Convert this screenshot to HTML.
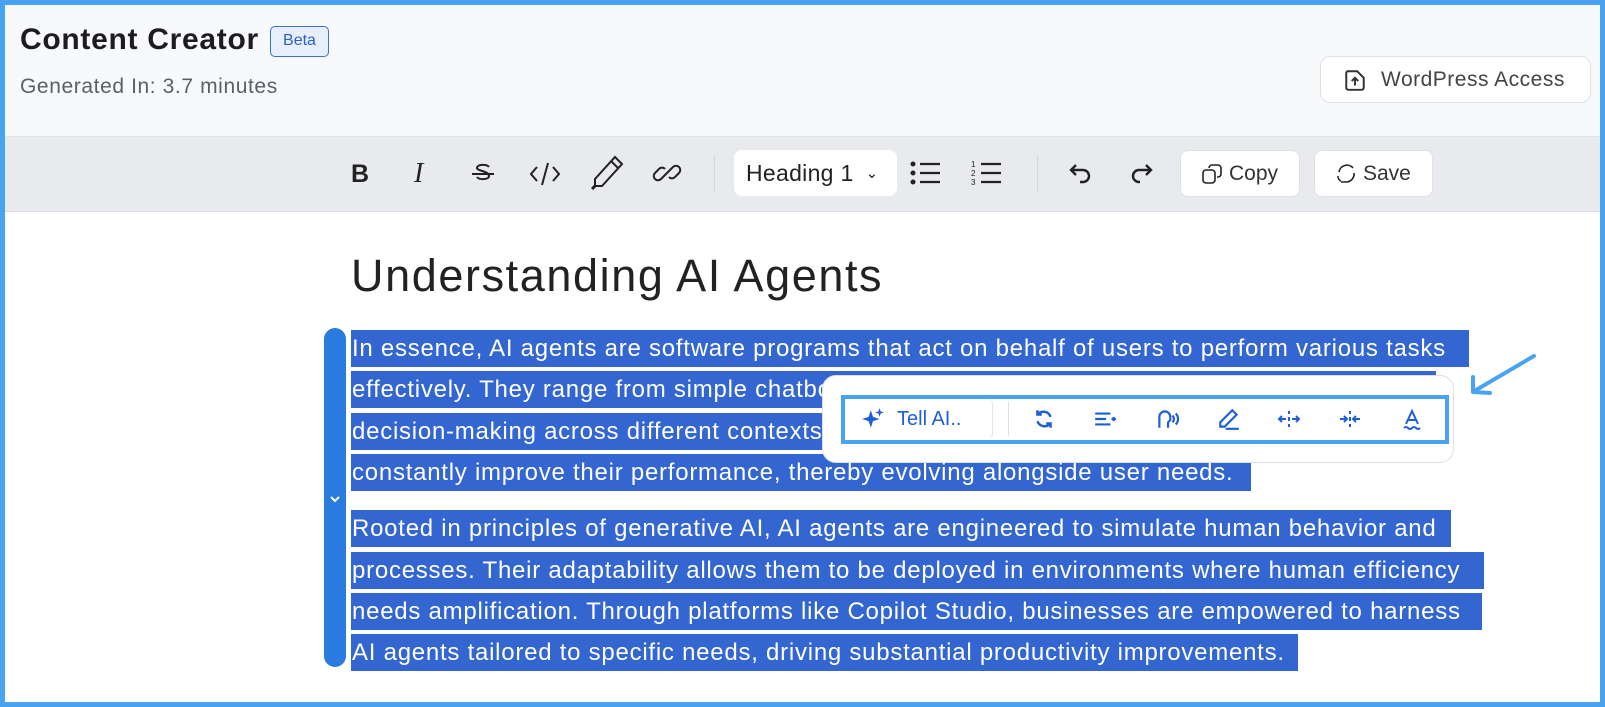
<!DOCTYPE html>
<html><head><meta charset="utf-8"><style>
*{margin:0;padding:0;box-sizing:border-box}
body{width:1605px;height:707px;overflow:hidden;background:#4aa3f0;font-family:"Liberation Sans",sans-serif;position:relative}
.abs{position:absolute}
.btn{position:absolute;background:#fff;border:1px solid #dfe1e5;border-radius:8px;display:flex;align-items:center;gap:8px;color:#333;font-size:21px}
.ln{position:absolute;left:351px;height:37px;background:#3366d0;color:#fff;font-size:24px;letter-spacing:0.75px;line-height:37px;white-space:nowrap;overflow:hidden;padding-left:1px}
.ic{position:absolute;top:408px}
</style></head><body>
<div class="abs" style="left:5px;top:5px;width:1595px;height:697px;background:#fff"></div>
<div class="abs" style="left:5px;top:5px;width:1595px;height:131px;background:#f8f9fb"></div>
<div class="abs" style="left:20px;top:23px;font-size:30px;font-weight:bold;color:#1d1d1f;letter-spacing:0.7px">Content Creator</div>
<div class="abs" style="left:270px;top:26px;width:59px;height:31px;border:1.5px solid #3a6fd6;border-radius:5px;background:#e8effc;color:#2d5fc8;font-size:16px;line-height:28px;text-align:center">Beta</div>
<div class="abs" style="left:20px;top:75px;font-size:21px;color:#5a5f68;letter-spacing:0.6px">Generated In: 3.7 minutes</div>
<div class="btn" style="left:1320px;top:56px;width:271px;height:47px;border-radius:10px;padding-left:22px;gap:14px;color:#444;letter-spacing:0.5px"><svg width="24" height="24" viewBox="0 0 22 22" fill="none" stroke="#333" stroke-width="1.8"><path d="M4 3h9l6 6v9a2 2 0 0 1-2 2H5a2 2 0 0 1-2-2V5a2 2 0 0 1 1-2z"/><path d="M11 16v-6M8 12l3-3 3 3"/></svg>WordPress Access</div>
<div class="abs" style="left:5px;top:136px;width:1595px;height:76px;background:#e9eaee;border-top:1px solid #e0e1e5;border-bottom:1px solid #dcdde2"></div>
<div class="abs" style="left:351px;top:160px;font-size:25px;font-weight:bold;color:#222">B</div>
<div class="abs" style="left:414px;top:158px;font-size:28px;font-style:italic;font-family:'Liberation Serif',serif;color:#222">I</div>
<svg class="abs" style="left:466px;top:157px" width="34" height="34" viewBox="0 0 34 34" fill="none" stroke="#222" stroke-width="2"><path d="M23 10c-2-3-12-3-12 1 0 3 12 3 12 8 0 4-10 4-12 1M6 17h22"/></svg>
<svg class="abs" style="left:527px;top:159px" width="36" height="30" viewBox="0 0 36 30" fill="none" stroke="#222" stroke-width="2"><path d="M10 8l-6 7 6 7M26 8l6 7-6 7M21 4l-6 22"/></svg>
<svg class="abs" style="left:587px;top:153px" width="40" height="40" viewBox="0 0 40 40" fill="none" stroke="#222" stroke-width="2"><path d="M28 4l7 7-20 22H8v-7z M24 8l7 7"/><path d="M8 33l-3 3" stroke-width="3"/></svg>
<svg class="abs" style="left:651px;top:157px" width="32" height="32" viewBox="0 0 32 32" fill="none" stroke="#222" stroke-width="2"><path d="M14 18l-4 4a4 4 0 0 1-6-6l4-4a4 4 0 0 1 6 0M18 14l4-4a4 4 0 0 1 6 6l-4 4a4 4 0 0 1-6 0M12 20l8-8"/></svg>
<div class="abs" style="left:714px;top:156px;width:1px;height:36px;background:#d5d6da"></div>
<div class="btn" style="left:734px;top:150px;width:163px;height:46px;border:none;padding-left:12px;font-size:23px;color:#222;letter-spacing:0.3px">Heading 1 <span style="font-size:15px;margin-left:4px">&#8964;</span></div>
<svg class="abs" style="left:908px;top:158px" width="34" height="30" viewBox="0 0 34 30" fill="none" stroke="#222" stroke-width="2.2"><path d="M12 6h20M12 15h20M12 24h20"/><circle cx="5" cy="6" r="1.4" fill="#222"/><circle cx="5" cy="15" r="1.4" fill="#222"/><circle cx="5" cy="24" r="1.4" fill="#222"/></svg>
<svg class="abs" style="left:969px;top:158px" width="34" height="30" viewBox="0 0 34 30" fill="none" stroke="#222" stroke-width="2.2"><path d="M12 6h20M12 15h20M12 24h20"/><text x="2" y="9" font-size="8" fill="#222" stroke="none">1</text><text x="2" y="18" font-size="8" fill="#222" stroke="none">2</text><text x="2" y="27" font-size="8" fill="#222" stroke="none">3</text></svg>
<div class="abs" style="left:1037px;top:156px;width:1px;height:36px;background:#d5d6da"></div>
<svg class="abs" style="left:1068px;top:161px" width="26" height="24" viewBox="0 0 26 24" fill="none" stroke="#222" stroke-width="2.4"><path d="M8 4L3 9l5 5M3 9h12a6 6 0 0 1 0 12h-3"/></svg>
<svg class="abs" style="left:1128px;top:161px" width="26" height="24" viewBox="0 0 26 24" fill="none" stroke="#222" stroke-width="2.4"><path d="M18 4l5 5-5 5M23 9H11a6 6 0 0 0 0 12h1"/></svg>
<div class="btn" style="left:1180px;top:150px;width:120px;height:47px;padding-left:20px;gap:6px"><svg width="22" height="22" viewBox="0 0 22 22" fill="none" stroke="#222" stroke-width="1.6"><rect x="2" y="7" width="12" height="13" rx="3"/><path d="M8 5a3 3 0 0 1 3-3h6a3 3 0 0 1 3 3v6a3 3 0 0 1-3 3h-1"/></svg>Copy</div>
<div class="btn" style="left:1314px;top:150px;width:119px;height:47px;padding-left:20px;gap:6px"><svg width="22" height="22" viewBox="0 0 22 22" fill="none" stroke="#222" stroke-width="1.6"><path d="M4 9a8 8 0 0 1 14-4M19 10a8 8 0 0 1-8 9H6M3 13a5 5 0 0 0 3 5"/></svg>Save</div>

<div class="abs" style="left:351px;top:250px;font-size:45px;color:#222;letter-spacing:1.6px">Understanding AI Agents</div>
<div class="abs" style="left:324px;top:328px;width:22px;height:339px;background:#2a7be0;border-radius:11px"></div>
<svg class="abs" style="left:329px;top:494px" width="12" height="10" viewBox="0 0 12 10" fill="none" stroke="#fff" stroke-width="2"><path d="M2 3l4 4 4-4"/></svg>

<div class="ln" style="top:330px;width:1118px">In essence, AI agents are software programs that act on behalf of users to perform various tasks</div>
<div class="ln" style="top:371px;width:1085px">effectively. They range from simple chatbots to more complex systems capable of autonomous</div>
<div class="ln" style="top:413px;width:1085px">decision-making across different contexts, and they can learn from experience and</div>
<div class="ln" style="top:454px;width:900px">constantly improve their performance, thereby evolving alongside user needs.</div>
<div class="ln" style="top:510px;width:1100px">Rooted in principles of generative AI, AI agents are engineered to simulate human behavior and</div>
<div class="ln" style="top:552px;width:1133px">processes. Their adaptability allows them to be deployed in environments where human efficiency</div>
<div class="ln" style="top:593px;width:1131px">needs amplification. Through platforms like Copilot Studio, businesses are empowered to harness</div>
<div class="ln" style="top:634px;width:947px">AI agents tailored to specific needs, driving substantial productivity improvements.</div>

<div class="abs" style="left:822px;top:375px;width:632px;height:88px;background:#fff;border:1px solid #dde0e5;border-radius:14px"></div>
<div class="abs" style="left:841px;top:395px;width:608px;height:49px;border:4px solid #4aa3f0"></div>
<div class="abs" style="left:847px;top:399px;width:146px;height:40px;border-right:1px solid #e2e4e8;border-radius:6px;display:flex;align-items:center;padding-left:14px;gap:12px;color:#1f5fd6;font-size:20px"><svg width="24" height="24" viewBox="0 0 22 22" fill="#1f5fd6"><path d="M9 3l2 6 6 2-6 2-2 6-2-6-6-2 6-2z"/><path d="M17 1l1 3 3 1-3 1-1 3-1-3-3-1 3-1z"/></svg>Tell AI..</div>
<div class="abs" style="left:1008px;top:402px;width:1px;height:34px;background:#dde0e5"></div>
<svg class="ic" style="left:1033px" width="22" height="22" viewBox="0 0 20 20" fill="none" stroke="#1f5fd6" stroke-width="2.2"><path d="M16 8a7 7 0 0 0-12-2M4 12a7 7 0 0 0 12 2M4 2v4h4M16 18v-4h-4"/></svg>
<svg class="ic" style="left:1093px" width="24" height="22" viewBox="0 0 22 20" fill="none" stroke="#1f5fd6" stroke-width="2"><path d="M2 5h14M2 10h10M2 15h14M17 10h4M19 8v4"/></svg>
<svg class="ic" style="left:1155px" width="24" height="22" viewBox="0 0 22 20" fill="none" stroke="#1f5fd6" stroke-width="2"><path d="M4 18V8a5 5 0 0 1 10 0v3l-2 2v5M16 7a4 4 0 0 1 0 6M19 5a7 7 0 0 1 0 10"/></svg>
<svg class="ic" style="left:1217px" width="24" height="22" viewBox="0 0 22 20" fill="none" stroke="#1f5fd6" stroke-width="2"><path d="M14 2l4 4-11 11H3v-4zM8 19h12"/></svg>
<svg class="ic" style="left:1277px" width="24" height="22" viewBox="0 0 24 20" fill="none" stroke="#1f5fd6" stroke-width="2"><path d="M12 2v3M12 8v4M12 15v3M2 10h7M5 7l-3 3 3 3M15 10h7M19 7l3 3-3 3"/></svg>
<svg class="ic" style="left:1338px" width="24" height="22" viewBox="0 0 24 20" fill="none" stroke="#1f5fd6" stroke-width="2"><path d="M12 2v3M12 8v4M12 15v3M2 10h7M6 7l3 3-3 3M15 10h7M18 7l-3 3 3 3"/></svg>
<svg class="ic" style="left:1401px" width="22" height="24" viewBox="0 0 22 22" fill="none" stroke="#1f5fd6" stroke-width="2"><path d="M5 15l6-13 6 13M7 11h8M3 19q2-2 4 0t4 0 4 0 4 0"/></svg>

<svg class="abs" style="left:1462px;top:350px" width="78" height="52" viewBox="0 0 78 52" fill="none" stroke="#4aa3f0" stroke-width="4" stroke-linecap="round"><path d="M72 6L14 40"/><path d="M11 27l0 15 17 1" stroke-linejoin="round"/></svg>
</body></html>
